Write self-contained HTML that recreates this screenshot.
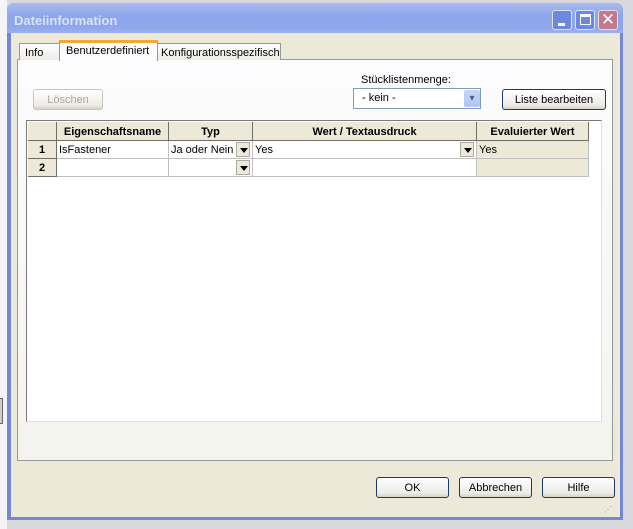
<!DOCTYPE html><html><head><style>
body{margin:0;width:633px;height:529px;overflow:hidden;background:#d8d8de;font-family:Tahoma,"Liberation Sans",sans-serif;font-size:11px;position:relative}
.a{position:absolute;box-sizing:border-box}
.btn{border:1px solid #1c3a70;border-radius:3px;background:linear-gradient(#fff,#ecebe6 80%,#d6d0c5);text-align:center;font-size:11px;color:#000}
.th{background:#ece9d8;border-right:1px solid #716f64;border-bottom:1px solid #716f64;font-weight:bold;text-align:center;line-height:20px}
.td{border-right:1px solid #c0c0c0;border-bottom:1px solid #c0c0c0;line-height:19px;padding-left:2px;background:#fff}
.dd{width:14px;height:15px;background:#ece9d8;border:1px solid #aaa;}
.dd:after{content:"";position:absolute;left:3px;top:5px;border:4px solid transparent;border-top:5px solid #000;border-bottom:0}
</style></head><body>
<div class="a" style="left:0;top:0;width:7px;height:529px;background:#f4f4f6"></div>
<div class="a" style="left:0;top:398px;width:3px;height:26px;border:1px solid #666;border-left:0;background:#ccc"></div>
<div class="a" style="left:7px;top:3px;width:616px;height:517px;background:#7486d8;border-radius:7px 7px 0 0"></div>
<div class="a" style="left:7px;top:3px;width:616px;height:30px;background:linear-gradient(#a9bcf0,#8ea6ec 40%,#8fa6eb 80%,#9bb0ee);border-radius:7px 7px 0 0"></div>
<div class="a" style="left:14px;top:13px;color:#d8e2fa;font-weight:bold;font-size:13px;font-family:'Liberation Sans',sans-serif">Dateiinformation</div>
<div class="a" style="left:552px;top:10px;width:20px;height:20px;border:1px solid #dde4fa;border-radius:3px;background:#6c88e0"><div class="a" style="left:5px;top:12px;width:7px;height:3px;background:#fff"></div></div>
<div class="a" style="left:575px;top:10px;width:20px;height:20px;border:1px solid #dde4fa;border-radius:3px;background:#6c88e0"><div class="a" style="left:4px;top:3px;width:11px;height:11px;border:1px solid #fff;border-top:3px solid #fff"></div></div>
<div class="a" style="left:598px;top:10px;width:20px;height:20px;border:1px solid #eedada;border-radius:3px;background:#c07a8c;color:#fff;font-size:17px;line-height:17px;text-align:center;font-family:'Liberation Sans'">✕</div>
<div class="a" style="left:11px;top:33px;width:609px;height:484px;background:#ece9d8"></div>
<div class="a" style="left:604px;top:505px;width:12px;height:10px;color:#a0a0a0;font-size:8px;letter-spacing:-1px">⋰</div>
<div class="a" style="left:17px;top:59px;width:596px;height:402px;border:1px solid #919b9c;background:linear-gradient(#fcfcfe,#f4f3ee)"></div>
<div class="a" style="left:19px;top:43px;width:41px;height:17px;border:1px solid #919b9c;border-bottom:0;background:linear-gradient(#fff,#ecebe5);padding:3px 5px">Info</div>
<div class="a" style="left:157px;top:43px;width:124px;height:17px;border:1px solid #919b9c;border-bottom:0;background:linear-gradient(#fff,#ecebe5);padding:3px 3px">Konfigurationsspezifisch</div>
<div class="a" style="left:59px;top:40px;width:99px;height:21px;border:1px solid #919b9c;border-top:3px solid #f1a837;border-bottom:0;background:#fcfcfe;padding:2px 6px">Benutzerdefiniert</div>
<div class="a btn" style="left:33px;top:89px;width:70px;height:21px;line-height:20px;color:#aca899;border-color:#c9c7ba">Löschen</div>
<div class="a" style="left:361px;top:74px">Stücklistenmenge:</div>
<div class="a" style="left:353px;top:88px;width:128px;height:21px;border:1px solid #7f9db9;background:#fff;padding:3px 0 0 8px">- kein -</div>
<div class="a" style="left:464px;top:90px;width:16px;height:17px;background:linear-gradient(#c6d3f7,#b1c4f5);border-radius:2px;color:#4d6185;text-align:center;font-size:10px;line-height:17px">▾</div>
<div class="a btn" style="left:502px;top:89px;width:104px;height:21px;line-height:20px">Liste bearbeiten</div>
<div class="a" style="left:26px;top:120px;width:576px;height:302px;background:#fff;border:1px solid #7a7a7a;border-right-color:#e0e0e0;border-bottom-color:#e0e0e0"></div>
<div class="a th" style="left:28px;top:122px;width:29px;height:19px"></div>
<div class="a th" style="left:57px;top:122px;width:112px;height:19px">Eigenschaftsname</div>
<div class="a th" style="left:169px;top:122px;width:84px;height:19px">Typ</div>
<div class="a th" style="left:253px;top:122px;width:224px;height:19px">Wert / Textausdruck</div>
<div class="a th" style="left:477px;top:122px;width:112px;height:19px">Evaluierter Wert</div>
<div class="a th" style="left:28px;top:141px;width:29px;height:18px;line-height:19px">1</div>
<div class="a th" style="left:28px;top:159px;width:29px;height:18px;line-height:19px">2</div>
<div class="a td" style="left:57px;top:141px;width:112px;height:18px">IsFastener</div>
<div class="a td" style="left:169px;top:141px;width:84px;height:18px">Ja oder Nein</div>
<div class="a dd" style="left:236px;top:142px"></div>
<div class="a td" style="left:253px;top:141px;width:224px;height:18px">Yes</div>
<div class="a dd" style="left:460px;top:142px"></div>
<div class="a td" style="left:477px;top:141px;width:112px;height:18px;background:#ece9d8">Yes</div>
<div class="a td" style="left:57px;top:159px;width:112px;height:18px"></div>
<div class="a td" style="left:169px;top:159px;width:84px;height:18px"></div>
<div class="a dd" style="left:236px;top:160px"></div>
<div class="a td" style="left:253px;top:159px;width:224px;height:18px"></div>
<div class="a td" style="left:477px;top:159px;width:112px;height:18px;background:#ece9d8"></div>
<div class="a btn" style="left:376px;top:477px;width:73px;height:21px;line-height:20px">OK</div>
<div class="a btn" style="left:459px;top:477px;width:73px;height:21px;line-height:20px">Abbrechen</div>
<div class="a btn" style="left:542px;top:477px;width:73px;height:21px;line-height:20px">Hilfe</div>
</body></html>
